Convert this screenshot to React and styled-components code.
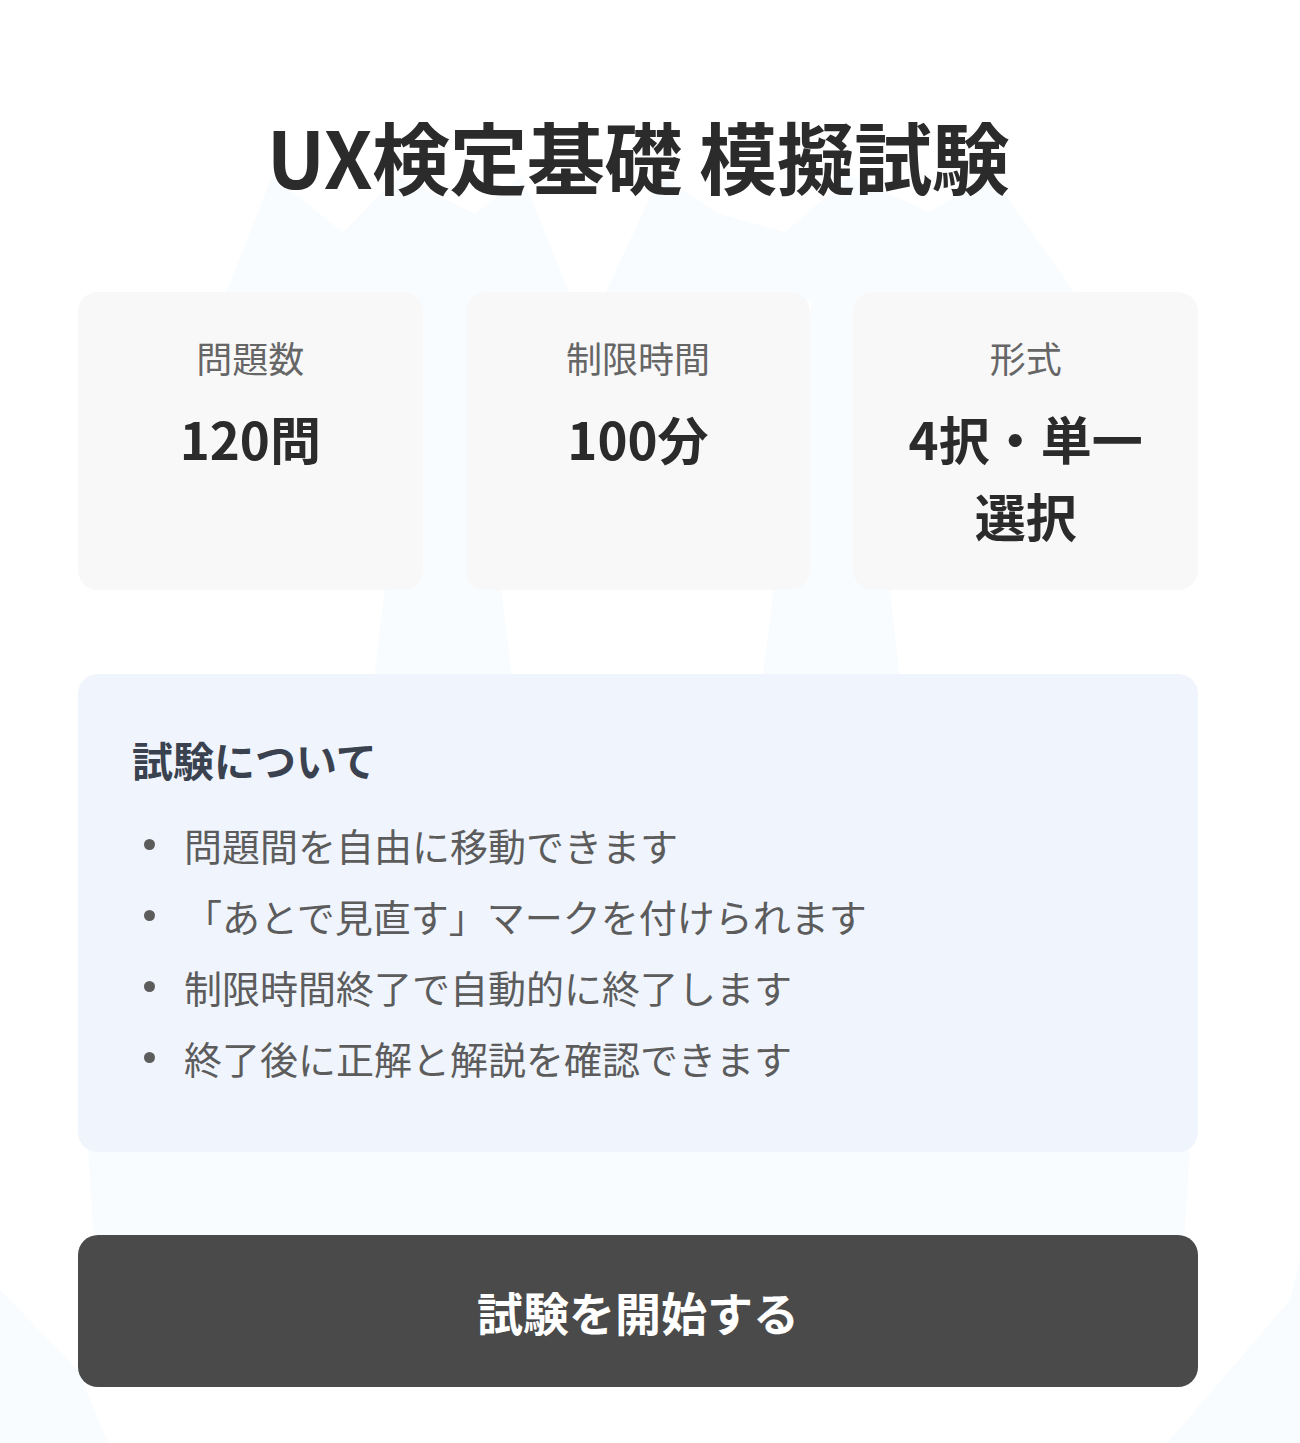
import React from 'react';
import styled, { createGlobalStyle } from 'styled-components';

const GlobalStyle = createGlobalStyle`
  html, body {
    margin: 0;
    padding: 0;
    background: #ffffff;
  }
  body {
    font-family: "Noto Sans CJK JP", "Noto Sans", sans-serif;
    color: #333333;
  }
`;

const stats = [
  { label: '問題数', value: '120問' },
  { label: '制限時間', value: '100分' },
  { label: '形式', value: '4択・単一選択' },
];

const rules = [
  '問題間を自由に移動できます',
  '「あとで見直す」マークを付けられます',
  '制限時間終了で自動的に終了します',
  '終了後に正解と解説を確認できます',
];

// faint mountain shapes behind the content
const Backdrop = () => (
  <Decor viewBox="0 0 1300 1443" preserveAspectRatio="none" aria-hidden="true">
    <g fill="#f9fcfe">
      <polygon points="223,300 272,176 343,232 398,176 475,214 522,176 572,300" />
      <polygon points="602,300 660,176 720,214 785,232 850,176 929,212 992,176 1080,300" />
      <polygon points="420,300 468,300 512,680 374,680" />
      <polygon points="812,300 858,300 900,680 762,680" />
      <polygon points="88,1150 1190,1150 1180,1300 98,1300" />
      <polygon points="0,1290 78,1370 108,1443 0,1443" />
      <polygon points="1300,1260 1290,1300 1167,1443 1300,1443" />
    </g>
  </Decor>
);

export default function App() {
  return (
    <>
      <GlobalStyle />
      <Page>
        <Backdrop />
        <Content>
          <Title>UX検定基礎 模擬試験</Title>

          <StatGrid>
            {stats.map((s) => (
              <StatCard key={s.label}>
                <StatLabel>{s.label}</StatLabel>
                <StatValue>{s.value}</StatValue>
              </StatCard>
            ))}
          </StatGrid>

          <InfoBox>
            <InfoTitle>試験について</InfoTitle>
            <RuleList>
              {rules.map((r) => (
                <Rule key={r}>{r}</Rule>
              ))}
            </RuleList>
          </InfoBox>

          <StartButton type="button">試験を開始する</StartButton>
        </Content>
      </Page>
    </>
  );
}

const Page = styled.div`
  position: relative;
  min-height: 1443px;
  overflow: hidden;
`;

const Decor = styled.svg`
  position: absolute;
  inset: 0;
  width: 100%;
  height: 100%;
  z-index: 0;
`;

const Content = styled.main`
  position: relative;
  z-index: 1;
  width: 1120px;
  margin-left: 78px;
  padding-top: 108px;
  padding-bottom: 55px;
  display: flex;
  flex-direction: column;
`;

const Title = styled.h1`
  margin: 0;
  text-align: center;
  font-size: 78px;
  line-height: 94px;
  font-weight: 700;
  color: #2b2b2b;
  letter-spacing: -0.5px;
`;

const StatGrid = styled.div`
  margin-top: 90px;
  display: grid;
  grid-template-columns: repeat(3, 1fr);
  gap: 43px;
`;

const StatCard = styled.div`
  background: #f8f8f9;
  border-radius: 20px;
  padding: 38px 46px 36px;
  text-align: center;
  display: flex;
  flex-direction: column;
  gap: 16px;
`;

const StatLabel = styled.div`
  font-size: 36px;
  line-height: 54px;
  color: #666666;
`;

const StatValue = styled.div`
  font-size: 51px;
  line-height: 77px;
  font-weight: 700;
  color: #2b2b2b;
`;

const InfoBox = styled.section`
  margin-top: 84px;
  background: #eff4fd;
  border-radius: 20px;
  padding: 55px 54px 59px;
`;

const InfoTitle = styled.h2`
  margin: 0;
  font-size: 41px;
  line-height: 61px;
  font-weight: 700;
  color: #3a4250;
`;

const RuleList = styled.ul`
  list-style: none;
  margin: 19px 0 0;
  padding: 0;
`;

const Rule = styled.li`
  position: relative;
  padding-left: 52px;
  font-size: 38px;
  line-height: 71px;
  color: #5c5c5c;

  &::before {
    content: '';
    position: absolute;
    left: 12px;
    top: 30px;
    width: 11px;
    height: 11px;
    border-radius: 50%;
    background: #5c5c5c;
  }
`;

const StartButton = styled.button`
  margin-top: 83px;
  height: 152px;
  border: none;
  border-radius: 20px;
  background: #4a4a4a;
  color: #ffffff;
  font-family: "Noto Sans CJK JP", "Noto Sans", sans-serif;
  font-size: 46px;
  font-weight: 700;
  cursor: pointer;
`;
